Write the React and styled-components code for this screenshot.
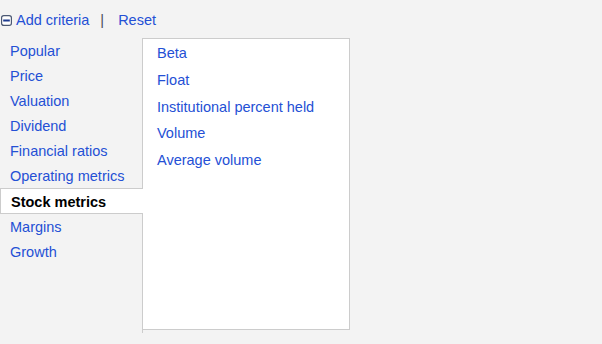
import React from "react";
import styled, { createGlobalStyle } from "styled-components";

const Global = createGlobalStyle`
  html, body { margin: 0; padding: 0; background: #f3f3f3; }
  body { font-family: "Liberation Sans", Arial, sans-serif; font-size: 14.5px; }
`;

const Page = styled.div`
  padding-top: 10px;
`;

const Toolbar = styled.div`
  display: flex;
  align-items: center;
  height: 20px;
  padding-left: 1px;
`;

const Icon = styled.svg`
  width: 11px;
  height: 11px;
  margin-right: 4px;
  flex: none;
`;

const Link = styled.a`
  color: #2450d5;
  text-decoration: none;
  cursor: pointer;
`;

const Sep = styled.span`
  color: #4a4a5a;
  margin: 0 14px 0 11px;
`;

const Row = styled.div`
  display: flex;
  align-items: flex-start;
  margin-top: 8px;
`;

const Nav = styled.div`
  display: flex;
  flex-direction: column;
  width: 142px;
  height: 295px;
  border-right: 1px solid #cccccc;
`;

const NavItem = styled.div`
  height: ${(p) => (p.$active ? "24px" : "25px")};
  line-height: ${(p) => (p.$active ? "26px" : "26px")};
  padding-left: 10px;
  color: ${(p) => (p.$active ? "#000" : "#2450d5")};
  font-weight: ${(p) => (p.$active ? "bold" : "normal")};
  background: ${(p) => (p.$active ? "#fff" : "transparent")};
  border: ${(p) => (p.$active ? "1px solid #cccccc" : "none")};
  border-right: none;
  margin-right: ${(p) => (p.$active ? "-1px" : "0")};
  white-space: nowrap;
  overflow: hidden;
  cursor: pointer;
`;

const Panel = styled.div`
  width: 206px;
  height: 289px;
  padding-top: 1px;
  background: #fff;
  border: 1px solid #cccccc;
  border-left: none;
  display: flex;
  flex-direction: column;
`;

const PanelItem = styled.div`
  line-height: 27px;
  height: 26.8px;
  padding-left: 14px;
  color: #2450d5;
  cursor: pointer;
  white-space: nowrap;
`;

const navItems = [
  "Popular",
  "Price",
  "Valuation",
  "Dividend",
  "Financial ratios",
  "Operating metrics",
  "Stock metrics",
  "Margins",
  "Growth",
];

const panelItems = [
  "Beta",
  "Float",
  "Institutional percent held",
  "Volume",
  "Average volume",
];

export default function App() {
  return (
    <>
      <Global />
      <Page>
        <Toolbar>
          <Icon viewBox="0 0 11 11">
            <rect x="0.6" y="0.6" width="9.8" height="9.8" rx="2.2" fill="#fff" stroke="#4b5873" strokeWidth="1.2" />
            <rect x="2.2" y="4.5" width="6.6" height="2" fill="#1c3a8f" />
          </Icon>
          <Link>Add criteria</Link>
          <Sep>|</Sep>
          <Link>Reset</Link>
        </Toolbar>
        <Row>
          <Nav>
            {navItems.map((n) => (
              <NavItem key={n} $active={n === "Stock metrics"}>
                {n}
              </NavItem>
            ))}
          </Nav>
          <Panel>
            {panelItems.map((n) => (
              <PanelItem key={n}>{n}</PanelItem>
            ))}
          </Panel>
        </Row>
      </Page>
    </>
  );
}
